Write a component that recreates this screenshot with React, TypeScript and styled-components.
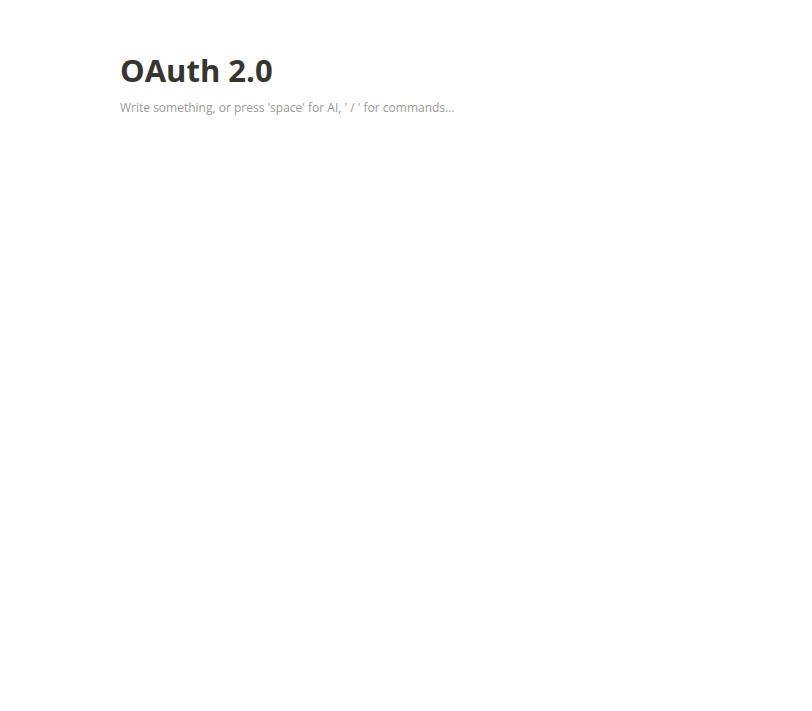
import React, { useState } from "react";
import styled, { createGlobalStyle } from "styled-components";

const GlobalStyle = createGlobalStyle`
  body {
    margin: 0;
    background: #ffffff;
    font-family: "Segoe UI", "Open Sans", "Noto Sans", sans-serif;
  }
`;

const Page = styled.main`
  box-sizing: border-box;
  min-height: 100vh;
  padding: 48px 120px;
`;

const Title = styled.h1`
  margin: 0;
  color: #37352f;
  font-size: 31px;
  font-weight: 700;
  line-height: 44px;
`;

const Editor = styled.textarea`
  display: block;
  box-sizing: border-box;
  width: 100%;
  min-height: 400px;
  margin: 4px 0 0;
  padding: 0;
  border: none;
  outline: none;
  resize: none;
  background: transparent;
  color: #37352f;
  font-family: inherit;
  font-size: 12px;
  line-height: 24px;

  &::placeholder {
    color: #9b9a97;
    opacity: 1;
  }
`;

const App: React.FC = () => {
  const [content, setContent] = useState("");

  return (
    <>
      <GlobalStyle />
      <Page>
        <Title id="page-title">OAuth 2.0</Title>
        <Editor
          aria-labelledby="page-title"
          placeholder="Write something, or press 'space' for AI, ' / ' for commands…"
          value={content}
          onChange={(e) => setContent(e.target.value)}
        />
      </Page>
    </>
  );
};

export default App;
